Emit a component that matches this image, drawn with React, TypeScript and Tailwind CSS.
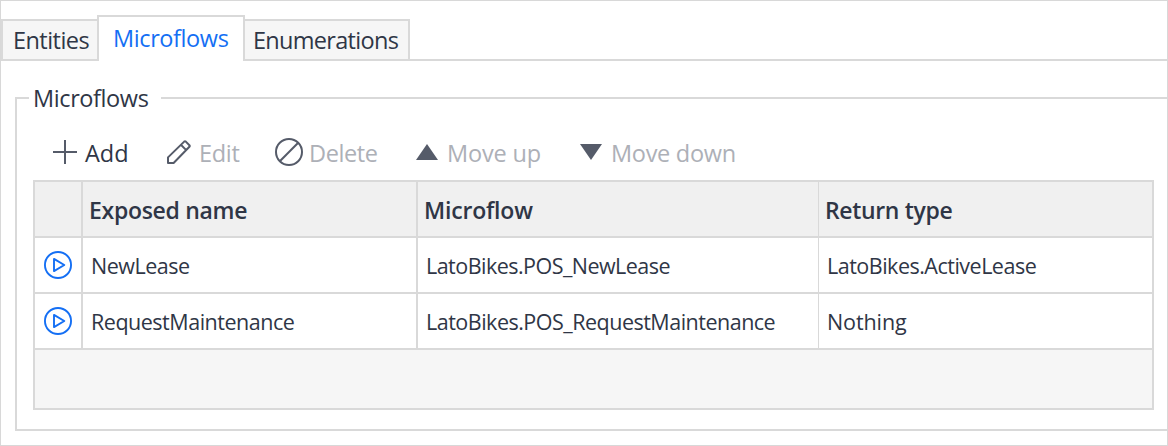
import type { ReactNode } from "react";

const rows = [
  { name: "NewLease", nameCls: "tracking-[-0.5px]", flow: "LatoBikes.POS_NewLease", flowCls: "tracking-[-0.53px]", type: "LatoBikes.ActiveLease", typeCls: "tracking-[-0.5px]" },
  { name: "RequestMaintenance", nameCls: "tracking-[-0.48px]", flow: "LatoBikes.POS_RequestMaintenance", flowCls: "tracking-[-0.5px]", type: "Nothing", typeCls: "tracking-[-0.1px]" },
];

function PlayIcon() {
  return (
    <svg className="mb-[2px] block h-7 w-7" viewBox="0 0 28 28" fill="none" stroke="#146ff4" strokeWidth="1.9" strokeLinejoin="round">
      <circle cx="14" cy="14" r="13.05" />
      <path d="M10 7.9 20.3 14 10 20.1Z" />
    </svg>
  );
}

function Tool({ className, labelClass, icon, label }: { className: string; labelClass: string; icon: ReactNode; label: string }) {
  return (
    <div className={`flex h-8 shrink-0 items-center ${className}`}>
      <span className="pb-[2px]">{icon}</span>
      <span className={`leading-8 ${labelClass}`}>{label}</span>
    </div>
  );
}

export default function App() {
  return (
    <div className="flex h-[446px] w-[1168px] flex-col overflow-hidden border border-[#d8d8d8] bg-white font-['Open_Sans','Noto_Sans',sans-serif] text-[23.5px] whitespace-nowrap text-[#2f3646]">
      <div className="flex h-[60px] shrink-0 items-end">
        <div className="h-[42px] w-24 shrink-0 border-2 border-r-0 border-[#d9d9d9] bg-[#f6f6f6] pl-[10px]">
          <span className="block pt-[3px] leading-8 tracking-[-0.55px]">Entities</span>
        </div>
        <div className="h-[46px] w-[148px] shrink-0 border-2 border-b-0 border-[#d9d9d9] bg-white pl-[14px]">
          <span className="block pt-[5px] leading-8 tracking-[-0.4px] text-[#146ff4]">Microflows</span>
        </div>
        <div className="h-[42px] w-[165px] shrink-0 border-2 border-l-0 border-[#d9d9d9] bg-[#f6f6f6] pl-[8px]">
          <span className="block pt-[3px] leading-8 tracking-[-0.7px]">Enumerations</span>
        </div>
        <div className="h-[2px] flex-1 bg-[#d9d9d9]" />
      </div>

      <div className="mt-[21px] ml-[14px] flex h-8 shrink-0">
        <div className="mt-[15px] w-[14px] border-t-2 border-l-2 border-[#d9d9d9]" />
        <div className="w-[132px] pl-[4px] leading-8 tracking-[-0.4px]">Microflows</div>
        <div className="mt-[15px] flex-1 border-t-2 border-[#d9d9d9]" />
      </div>
      <div className="ml-[14px] h-[317px] shrink-0 border-b-2 border-l-2 border-[#d9d9d9] pl-4">
        <div className="flex h-[65px] pt-[23px] text-[#adb0b7]">
          <Tool
            className="w-[132px] pl-[20px]"
            labelClass="pl-[8px] tracking-[0px] text-[#2f3646]"
            label="Add"
            icon={<svg className="block h-6 w-6" viewBox="0 0 24 24" stroke="#555b69" strokeWidth="2"><path d="M0 12H24M12 0V24" /></svg>}
          />
          <Tool
            className="w-[110px] pl-[2px]"
            labelClass="pl-[8px] tracking-[-0.3px]"
            label="Edit"
            icon={<svg className="block h-6 w-6" viewBox="0 0 24 24" fill="none" stroke="#555b69" strokeWidth="2" strokeLinejoin="round"><path d="M1 23V17.4L17.2 1.6Q18 .9 18.8 1.6L22.4 5.2Q23.1 6 22.4 6.8L6.6 23ZM13.9 4.8 19.2 10.1" /></svg>}
          />
          <Tool
            className="w-[141px]"
            labelClass="pl-[6px] tracking-[-0.4px]"
            label="Delete"
            icon={<svg className="block h-7 w-7" viewBox="0 0 28 28" fill="none" stroke="#555b69" strokeWidth="2"><circle cx="14" cy="14" r="13" /><path d="M4.8 23.2 23.2 4.8" /></svg>}
          />
          <Tool
            className="w-[164px]"
            labelClass="pl-[9px] tracking-[-0.15px]"
            label="Move up"
            icon={<svg className="block h-4 w-[22px]" viewBox="0 0 22 16" fill="#555b69"><path d="M11 0 22 16H0Z" /></svg>}
          />
          <Tool
            className="w-[180px]"
            labelClass="pl-[9px] tracking-[-0.3px]"
            label="Move down"
            icon={<svg className="block h-4 w-[22px]" viewBox="0 0 22 16" fill="#555b69"><path d="M0 0H22L11 16Z" /></svg>}
          />
        </div>

        <div className="mt-px h-[230px] w-[1121px] border-2 border-[#d9d9d9] bg-[#f6f6f6]">
          <div className="grid h-14 grid-cols-[48px_335px_401px_333px] border-b-2 border-[#d9d9d9] bg-[#f0f0f0] text-[23px] leading-[56px] font-semibold">
            <div className="border-r-2 border-[#d9d9d9]" />
            <div className="border-r-2 border-[#d9d9d9] pl-[6px] tracking-[-0.3px]">Exposed name</div>
            <div className="border-r border-[#d9d9d9] pl-[6px] tracking-[-0.2px]">Microflow</div>
            <div className="pl-[6px] tracking-[-0.35px]">Return type</div>
          </div>
          {rows.map((r) => (
            <div key={r.name} className="grid h-14 grid-cols-[48px_335px_401px_333px] border-b-2 border-[#d9d9d9] bg-white text-[21.5px] leading-[56px]">
              <div className="flex items-center border-r-2 border-[#d9d9d9] pl-[9px]"><PlayIcon /></div>
              <div className={`border-r-2 border-[#d9d9d9] pl-2 ${r.nameCls}`}>{r.name}</div>
              <div className={`border-r border-[#d9d9d9] pl-2 ${r.flowCls}`}>{r.flow}</div>
              <div className={`pl-2 ${r.typeCls}`}>{r.type}</div>
            </div>
          ))}
        </div>
      </div>
    </div>
  );
}
